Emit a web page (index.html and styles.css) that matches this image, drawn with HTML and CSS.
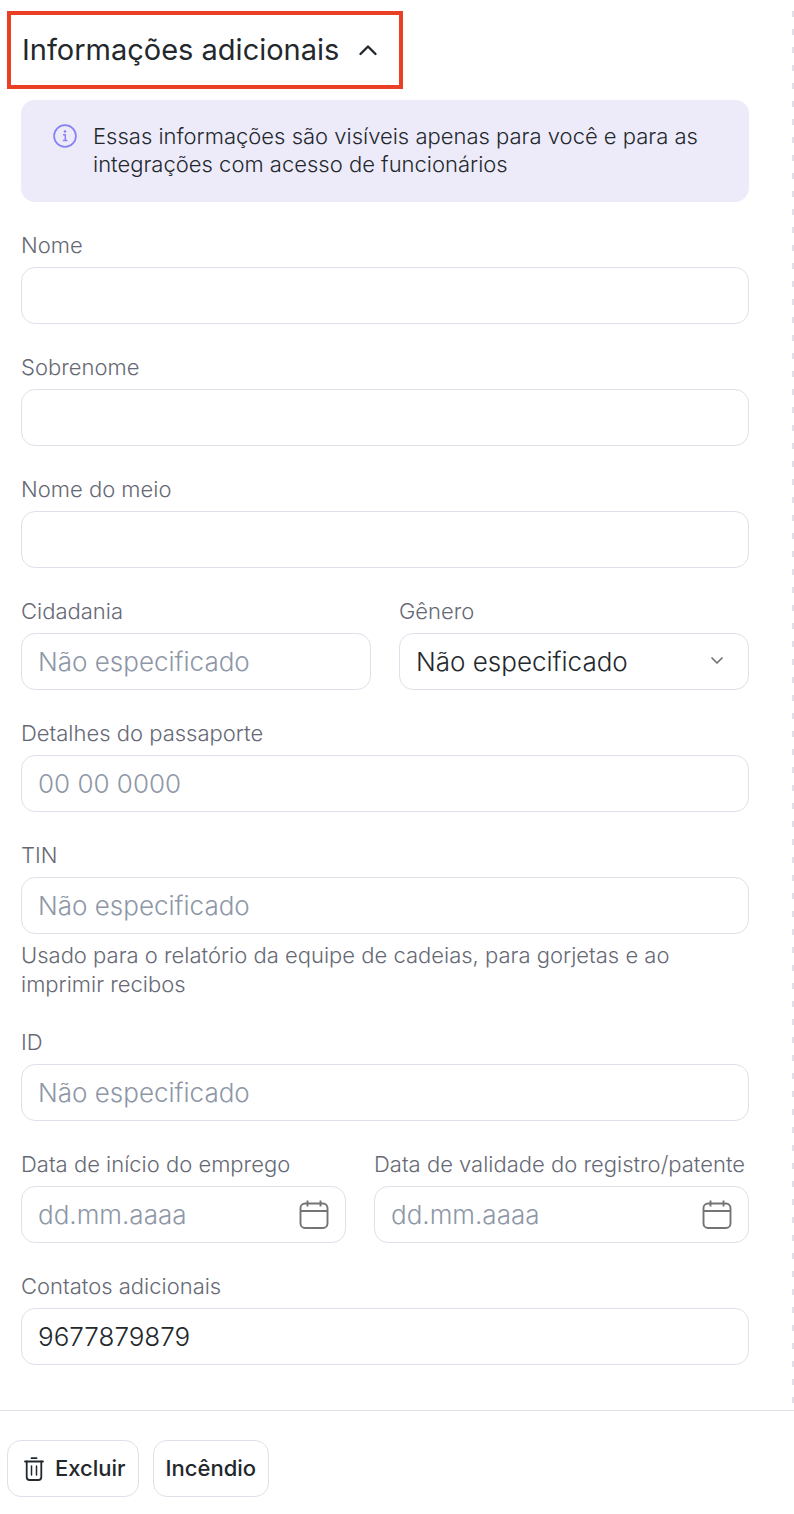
FILE: index.html
```html
<!DOCTYPE html>
<html lang="pt">
<head>
    <meta charset="UTF-8">
    <meta name="viewport" content="width=device-width, initial-scale=1">
    <title>Informações adicionais</title>
    <link rel="stylesheet" href="styles.css">
</head>
<body>
    <form class="page">
        <main class="content">
            <h2 class="section-title">
                <button type="button" class="section-toggle" aria-expanded="true">
                    Informações adicionais
                    <svg width="20" height="20" viewBox="0 0 20 20" fill="none" stroke="currentColor" stroke-width="2.4" stroke-linecap="round" stroke-linejoin="round" aria-hidden="true">
                        <path d="M2.5 14L10 6.5l7.5 7.5" />
                    </svg>
                </button>
            </h2>

            <div class="fields">
                <div class="notice">
                    <svg class="notice-icon" width="24" height="24" viewBox="0 0 24 24" fill="none" stroke="currentColor" aria-hidden="true">
                        <circle cx="12" cy="12" r="10.9" stroke-width="1.7" />
                        <path d="M10 10.7h2.3v6M9.8 16.4h4.6" stroke-width="1.5" />
                        <circle cx="12" cy="7.5" r="1.3" fill="currentColor" stroke="none" />
                    </svg>
                    <p>Essas informações são visíveis apenas para você e para as integrações com acesso de funcionários</p>
                </div>

                <div class="field">
                    <label for="first-name">Nome</label>
                    <input class="control" type="text" id="first-name">
                </div>
                <div class="field">
                    <label for="last-name">Sobrenome</label>
                    <input class="control" type="text" id="last-name">
                </div>
                <div class="field">
                    <label for="middle-name">Nome do meio</label>
                    <input class="control" type="text" id="middle-name">
                </div>

                <div class="row">
                    <div class="field">
                        <label for="citizenship">Cidadania</label>
                        <input class="control" type="text" id="citizenship" placeholder="Não especificado">
                    </div>
                    <div class="field">
                        <label for="gender">Gênero</label>
                        <div class="select">
                            <select class="control" id="gender">
                                <option>Não especificado</option>
                            </select>
                            <svg width="14" height="14" viewBox="0 0 14 14" fill="none" stroke="currentColor" stroke-width="1.7" stroke-linecap="round" stroke-linejoin="round" aria-hidden="true">
                                <path d="M2 3l5 5 5-5" />
                            </svg>
                        </div>
                    </div>
                </div>

                <div class="field">
                    <label for="passport">Detalhes do passaporte</label>
                    <input class="control" type="text" id="passport" placeholder="00 00 0000">
                </div>
                <div class="field">
                    <label for="tin">TIN</label>
                    <input class="control" type="text" id="tin" placeholder="Não especificado" aria-describedby="tin-hint">
                    <p class="hint" id="tin-hint">Usado para o relatório da equipe de cadeias, para gorjetas e ao imprimir recibos</p>
                </div>
                <div class="field">
                    <label for="employee-id">ID</label>
                    <input class="control" type="text" id="employee-id" placeholder="Não especificado">
                </div>

                <div class="row row-dates">
                    <div class="field">
                        <label for="start-date">Data de início do emprego</label>
                        <div class="control date">
                            <input type="text" id="start-date" placeholder="dd.mm.aaaa">
                            <button type="button" aria-label="Abrir calendário">
                                <svg width="30" height="30" viewBox="0 0 30 30" fill="none" stroke="currentColor" stroke-width="1.9" aria-hidden="true">
                                    <rect x="1.5" y="3.5" width="27" height="24.5" rx="4.5" />
                                    <path d="M1.5 11h27M8.5 .5v6M21.5 .5v6" />
                                </svg>
                            </button>
                        </div>
                    </div>
                    <div class="field">
                        <label for="expiry-date">Data de validade do registro/patente</label>
                        <div class="control date">
                            <input type="text" id="expiry-date" placeholder="dd.mm.aaaa">
                            <button type="button" aria-label="Abrir calendário">
                                <svg width="30" height="30" viewBox="0 0 30 30" fill="none" stroke="currentColor" stroke-width="1.9" aria-hidden="true">
                                    <rect x="1.5" y="3.5" width="27" height="24.5" rx="4.5" />
                                    <path d="M1.5 11h27M8.5 .5v6M21.5 .5v6" />
                                </svg>
                            </button>
                        </div>
                    </div>
                </div>

                <div class="field">
                    <label for="contacts">Contatos adicionais</label>
                    <input class="control" type="text" id="contacts" value="9677879879">
                </div>
            </div>
        </main>

        <footer class="actions">
            <button type="button" class="button">
                <svg width="20" height="24" viewBox="0 0 20 24" fill="none" stroke="currentColor" stroke-width="1.8" stroke-linecap="round" aria-hidden="true">
                    <path d="M7.5 1.2h5M1 4.5h18" />
                    <path d="M2.7 4.5v15.5a3 3 0 0 0 3 3h8.6a3 3 0 0 0 3-3V4.5" />
                    <path d="M7.5 9v9M12.5 9v9" stroke-width="1.5" />
                </svg>
                Excluir
            </button>
            <button type="button" class="button">Incêndio</button>
        </footer>
    </form>
</body>
</html>
```

FILE: styles.css
```css
* {
    box-sizing: border-box;
}
body {
    margin: 0;
    font-family: Inter, "Liberation Sans", sans-serif;
    font-size: 22px;
    font-weight: 300;
    line-height: 29px;
    color: #23282c;
    background-color: #fff;
}
p {
    margin: 0;
}
button, input, select {
    font: inherit;
    color: inherit;
}
button {
    cursor: pointer;
}
.content {
    padding: 11px 45px 45px 7px;
    /* dashed panel edge */
    background: linear-gradient(#dfe0ea 6px, transparent 6px) right 11px / 2px 18px repeat-y;
}
.section-title {
    width: fit-content;
    margin: 0 0 11px;
    font-size: 29px;
    font-weight: 400;
    line-height: 38px;
    border: 4px solid #e94025;
}
.section-toggle {
    display: flex;
    align-items: center;
    gap: 19px;
    padding: 16px 21px 16px 11px;
    border: none;
    background: none;
}
.fields {
    display: flex;
    flex-direction: column;
    gap: 29px;
    padding-left: 14px;
}
.notice {
    display: flex;
    gap: 16px;
    padding: 22px 32px 24px;
    line-height: 28px;
    border-radius: 14px;
    background-color: #edebfa;
}
.notice-icon {
    flex: none;
    margin-top: 2px;
    color: #8880f5;
}
.row {
    display: grid;
    grid-template-columns: 1fr 1fr;
    gap: 28px;
}
.row-dates {
    grid-template-columns: 13fr 15fr;
}
.field {
    display: flex;
    flex-direction: column;
    gap: 7px;
    min-width: 0;
}
.field label, .hint {
    color: #666975;
}
.control {
    width: 100%;
    height: 57px;
    padding: 0 16px;
    font-size: 26px;
    border: 1px solid #dfe0ea;
    border-radius: 14px;
    background-color: #fff;
}
input::placeholder {
    color: #8e97a7;
    opacity: 1;
}
.select {
    display: grid;
    align-items: center;
}
.select select, .select svg {
    grid-area: 1 / 1;
}
.select select {
    appearance: none;
}
.select svg {
    justify-self: end;
    margin-right: 25px;
    color: #6f7172;
    pointer-events: none;
}
.date {
    display: flex;
    align-items: center;
}
.date input {
    flex: 1;
    min-width: 0;
    padding: 0;
    border: none;
    background: none;
}
.date button {
    display: flex;
    padding: 0;
    border: none;
    background: none;
    color: #747474;
}
.actions {
    display: flex;
    gap: 14px;
    padding: 29px 7px 17px;
    border-top: 1px solid #dfe0ea;
}
.button {
    display: flex;
    align-items: center;
    gap: 11px;
    height: 57px;
    padding: 0 12px;
    font-weight: 500;
    border: 1px solid #dfe0ea;
    border-radius: 14px;
    background-color: #fff;
}
.button svg {
    margin-left: 4px;
}
```
